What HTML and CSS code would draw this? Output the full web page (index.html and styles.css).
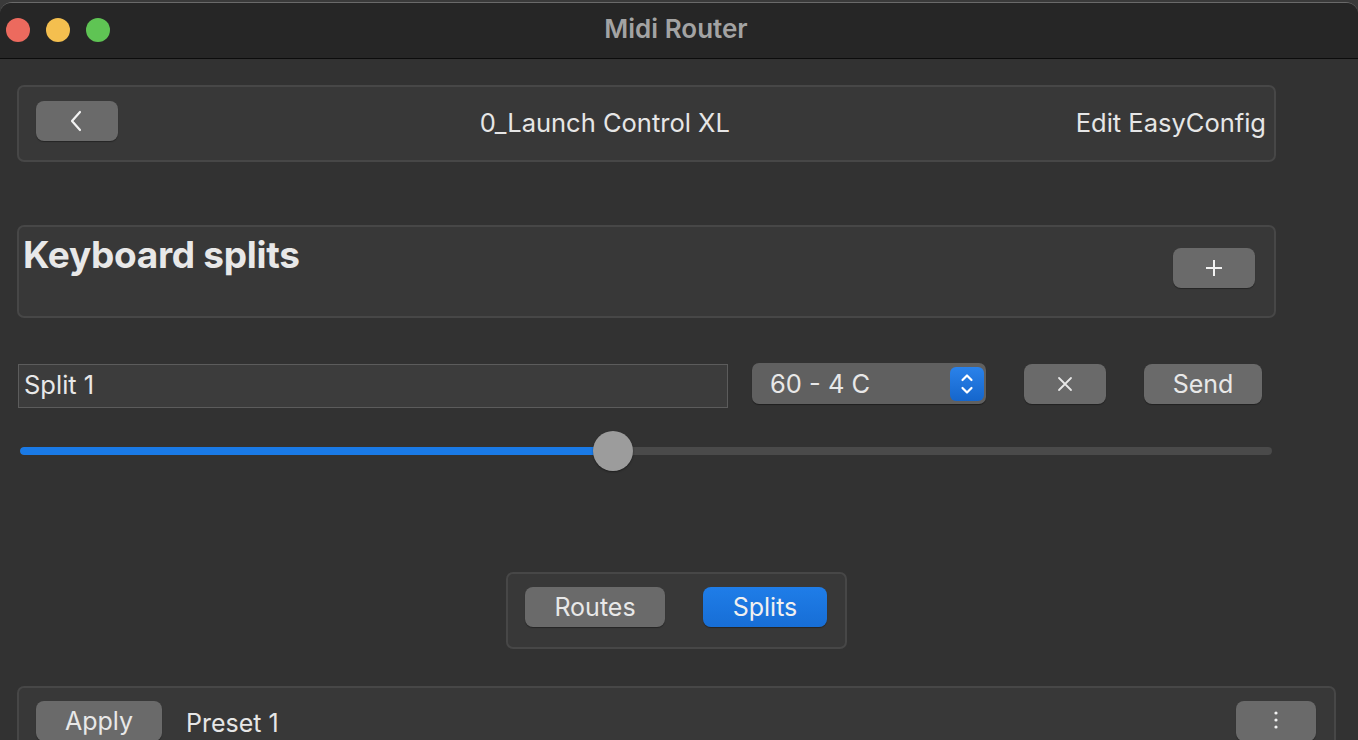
FILE: index.html
```html
<!DOCTYPE html>
<html>
<head>
<meta charset="utf-8">
<title>Midi Router</title>
<link rel="stylesheet" href="styles.css">
</head>
<body>
<div class="window">
  <div class="titlebar">
    <div class="lights">
      <span class="light red"></span>
      <span class="light yellow"></span>
      <span class="light green"></span>
    </div>
    <div class="title">Midi Router</div>
  </div>
  <div class="content">
    <div class="box header">
      <button class="btn back">
        <svg width="16" height="22" viewBox="0 0 16 22"><path d="M11 2 L3 11 L11 20" fill="none" stroke="#f2f2f2" stroke-width="2.2" stroke-linecap="round" stroke-linejoin="round"/></svg>
      </button>
      <div class="device">0_Launch Control XL</div>
      <div class="edit">Edit EasyConfig</div>
    </div>

    <div class="box splits">
      <h1 class="heading">Keyboard splits</h1>
      <button class="btn plus">
        <svg width="18" height="18" viewBox="0 0 18 18"><path d="M9 1 V17 M1 9 H17" stroke="#f2f2f2" stroke-width="2"/></svg>
      </button>
    </div>

    <div class="split-row">
      <div class="field">Split 1</div>
      <div class="popup">
        <span class="popup-text">60 - 4 C</span>
        <span class="stepper">
          <svg width="16" height="28" viewBox="0 0 16 28"><path d="M3.5 10 L8 5.5 L12.5 10 M3.5 18 L8 22.5 L12.5 18" fill="none" stroke="#fff" stroke-width="2.2" stroke-linecap="round" stroke-linejoin="round"/></svg>
        </span>
      </div>
      <button class="btn close">
        <svg width="16" height="16" viewBox="0 0 16 16"><path d="M2 2 L14 14 M14 2 L2 14" stroke="#e8e8e8" stroke-width="1.8" stroke-linecap="round"/></svg>
      </button>
      <button class="btn send">Send</button>
    </div>

    <div class="slider">
      <div class="track">
        <div class="fill" style="width: 47%"></div>
      </div>
      <div class="knob" style="left: 573px"></div>
    </div>

    <div class="segment-row">
      <div class="box segment">
        <button class="btn seg">Routes</button>
        <button class="btn seg active">Splits</button>
      </div>
    </div>

    <div class="box preset">
      <button class="btn apply">Apply</button>
      <div class="preset-name">Preset 1</div>
      <button class="btn more">
        <svg width="6" height="22" viewBox="0 0 6 22"><circle cx="3" cy="3" r="1.6" fill="#f2f2f2"/><circle cx="3" cy="10" r="1.6" fill="#f2f2f2"/><circle cx="3" cy="17" r="1.6" fill="#f2f2f2"/></svg>
      </button>
    </div>
  </div>
</div>
</body>
</html>
```

FILE: styles.css
```css
* { box-sizing: border-box; }
html, body { margin: 0; padding: 0; }
body {
  width: 1358px;
  height: 740px;
  overflow: hidden;
  background: #3a3a3a;
  font-family: Inter, "Noto Sans", "Liberation Sans", sans-serif;
  color: #e6e6e6;
}
.window {
  margin-top: 2px;
  height: 738px;
  background: #323232;
  border-top: 1px solid #6a6a6a;
  border-radius: 12px 12px 0 0;
  overflow: hidden;
}
.titlebar {
  position: relative;
  height: 56px;
  background: #262626;
  border-bottom: 1px solid #0c0c0c;
  display: flex;
  align-items: center;
}
.lights {
  display: flex;
  gap: 16px;
  padding-left: 6px;
  margin-top: -2px;
}
.light {
  width: 24px;
  height: 24px;
  border-radius: 50%;
  display: block;
}
.red { background: #ec6a5e; }
.yellow { background: #f4bf4f; }
.green { background: #5fc454; }
.title {
  position: absolute;
  left: 0;
  right: 6px;
  top: 10px;
  text-align: center;
  font-size: 26px;
  font-weight: 600;
  color: #a3a3a3;
}
.content {
  padding-top: 26px;
}
.box {
  background: #383838;
  border: 2px solid #474747;
  border-radius: 7px;
}
.btn {
  font-family: Inter, "Noto Sans", "Liberation Sans", sans-serif;
  background: #6a6a6a;
  border: none;
  border-radius: 8px;
  color: #e8e8e8;
  box-shadow: 0 1px 1px rgba(0,0,0,0.35);
  display: flex;
  align-items: center;
  justify-content: center;
  padding: 0;
  height: 40px;
}
.header {
  margin-left: 17px;
  width: 1259px;
  height: 77px;
  display: flex;
  align-items: center;
  padding: 0 8px 3px 17px;
}
.back {
  width: 82px;
  margin-top: -3px;
}
.device {
  flex: 1;
  text-align: center;
  font-size: 25.5px;
  margin-left: 16px;
}
.edit {
  font-size: 25.5px;
}
.splits {
  margin-top: 63px;
  margin-left: 17px;
  width: 1259px;
  height: 93px;
  display: flex;
  justify-content: space-between;
  align-items: flex-start;
  padding: 0 19px 0 4px;
}
.heading {
  margin: 5px 0 0 0;
  font-size: 37px;
  font-weight: 700;
  color: #e8e8e8;
  letter-spacing: -0.3px;
}
.plus {
  width: 82px;
  margin-top: 21px;
}
.split-row {
  margin-top: 46px;
  margin-left: 18px;
  display: flex;
  align-items: flex-start;
}
.field {
  width: 710px;
  height: 44px;
  background: #3c3c3c;
  border: 1px solid #5c5c5c;
  font-size: 25.5px;
  padding: 4px 0 0 5px;
  color: #e8e8e8;
}
.popup {
  margin-left: 24px;
  width: 234px;
  height: 41px;
  margin-top: -1px;
  background: #606060;
  border-radius: 7px;
  box-shadow: 0 1px 1px rgba(0,0,0,0.4);
  display: flex;
  align-items: center;
  justify-content: space-between;
  padding: 0 2px 0 18px;
}
.popup-text {
  font-size: 25.5px;
  color: #e8e8e8;
}
.stepper {
  width: 34px;
  height: 34px;
  border-radius: 6px;
  background: linear-gradient(#2a82ea, #1566cc);
  display: flex;
  align-items: center;
  justify-content: center;
}
.close {
  margin-left: 38px;
  width: 82px;
}
.send {
  margin-left: 38px;
  width: 118px;
  font-size: 25px;
}
.slider {
  position: relative;
  margin-left: 20px;
  width: 1252px;
  height: 40px;
  margin-top: 23px;
}
.track {
  position: absolute;
  left: 0;
  right: 0;
  top: 16px;
  height: 8px;
  background: #4a4a4a;
  border-radius: 4px;
  overflow: hidden;
}
.fill {
  height: 100%;
  background: #1a7ae6;
  border-radius: 4px 0 0 4px;
}
.knob {
  position: absolute;
  top: 0;
  width: 40px;
  height: 40px;
  border-radius: 50%;
  background: #9c9c9c;
  box-shadow: 0 1px 2px rgba(0,0,0,0.4);
}
.segment-row {
  margin-top: 101px;
  display: flex;
  justify-content: center;
  padding-right: 5px;
}
.segment {
  width: 341px;
  height: 77px;
  display: flex;
  align-items: flex-start;
  padding: 13px 0 0 17px;
}
.seg {
  font-size: 25px;
  width: 140px;
}
.seg.active {
  margin-left: 38px;
  width: 124px;
  background: linear-gradient(#1f7de8, #176ed6);
  color: #f0f0f0;
}
.preset {
  margin-top: 37px;
  margin-left: 17px;
  width: 1319px;
  height: 80px;
  display: flex;
  align-items: flex-start;
  padding: 13px 0 0 17px;
}
.apply {
  width: 126px;
  font-size: 25px;
}
.preset-name {
  margin-left: 24px;
  margin-top: 7px;
  font-size: 25px;
  flex: 1;
}
.more {
  width: 80px;
  margin-right: 18px;
}
```
